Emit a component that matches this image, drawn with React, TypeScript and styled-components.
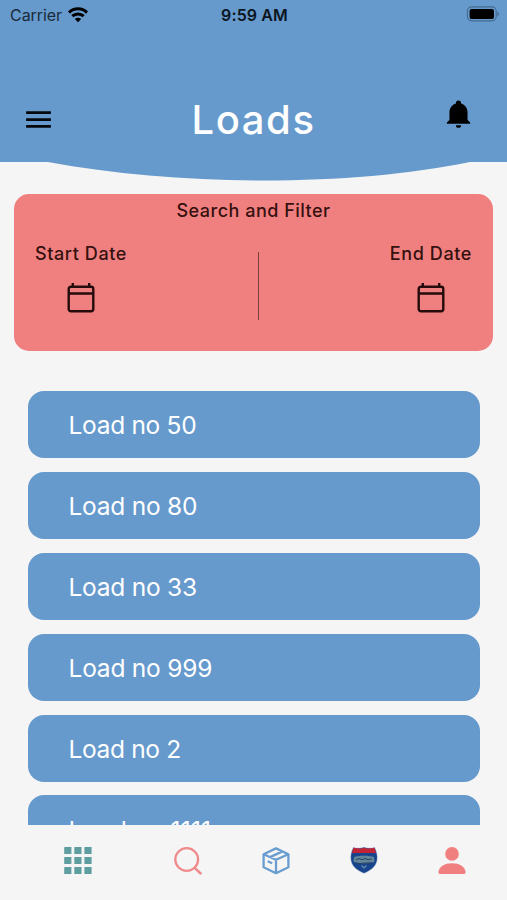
import React from 'react';
import styled, { createGlobalStyle } from 'styled-components';

const BLUE = '#6699cc';
const CORAL = '#f08080';
const PAPER = '#f5f5f5';

const GlobalStyle = createGlobalStyle`
  * { box-sizing: border-box; }
  body { margin: 0; background: ${PAPER}; font-family: Inter, "Liberation Sans", sans-serif; }
  svg { display: block; flex: none; }
`;

const Screen = styled.div`
  width: 507px;
  height: 900px;
  display: flex;
  flex-direction: column;
  overflow: hidden;
  background: ${PAPER};
`;

const Header = styled.header`
  height: 162px;
  flex: none;
  background: ${BLUE};
`;

const StatusBar = styled.div`
  height: 29px;
  padding: 0 8px 0 10px;
  display: grid;
  grid-template-columns: 1fr auto 1fr;
  align-items: center;
  color: #0b1620;
  font-size: 16px;
`;

const Carrier = styled.div`
  display: flex;
  align-items: center;
  gap: 6px;
  color: #1a2b3b;
  letter-spacing: -0.05px;
`;

const Clock = styled.div`
  font-weight: 600;
  letter-spacing: 0.1px;
`;

const Battery = styled.div`
  display: flex;
  justify-content: flex-end;
  padding-bottom: 1px;
`;

const TitleBar = styled.div`
  height: 64px;
  margin-top: 58px;
  padding: 0 33px 0 22px;
  display: flex;
  align-items: center;
  justify-content: space-between;
`;

const BellSlot = styled.div`
  padding-bottom: 11px;
`;

const Title = styled.h1`
  margin: 1px 0 0 9px;
  color: #fff;
  font-size: 40px;
  line-height: 48px;
  font-weight: 500;
  letter-spacing: 1.6px;
`;

const FilterCard = styled.section`
  height: 156.5px;
  flex: none;
  margin: 13px 14px 0;
  padding-top: 5px;
  border-radius: 15px;
  background: ${CORAL};
  color: #35110f;
  font-size: 18px;
  line-height: 24px;
  font-weight: 500;
  letter-spacing: 0.5px;
`;

const FilterTitle = styled.div`
  text-align: center;
`;

const DateRow = styled.div`
  margin-top: 19px;
  padding: 0 21px;
  display: grid;
  grid-template-columns: 1fr 1px 1fr;
`;

const DateField = styled.div<{ $end?: boolean }>`
  display: flex;
  flex-direction: column;
  align-items: center;
  gap: 16px;
  letter-spacing: 0.6px;
  justify-self: ${(p) => (p.$end ? 'end' : 'start')};
`;

const Divider = styled.div`
  height: 68px;
  margin: 10px -5px 0 5px;
  background: #7a3d3c;
`;

const LoadList = styled.main`
  height: 433.5px;
  flex: none;
  margin-top: 40.5px;
  padding: 0 27px 0 28px;
  display: flex;
  flex-direction: column;
  gap: 13.5px;
  overflow: hidden;
`;

const LoadItem = styled.div<{ $tracking: number }>`
  height: 67.4px;
  flex: none;
  padding: 1px 0 0 40.5px;
  display: flex;
  align-items: center;
  border-radius: 16px;
  background: ${BLUE};
  color: #fff;
  font-size: 24.5px;
  letter-spacing: ${(p) => p.$tracking}px;
`;

const TabBar = styled.nav`
  flex: 1;
  padding: 22px 40px 0 64px;
  display: flex;
  align-items: flex-start;
`;

const Tab = styled.div<{ $gap?: number }>`
  width: 28px;
  margin-right: ${(p) => p.$gap ?? 0}px;
`;

const Curve = () => (
  <svg width="507" height="19" viewBox="0 0 507 19">
    <path d="M48 0C180 24.7 350 24.7 470 0Z" fill={BLUE} />
  </svg>
);

const WifiIcon = () => (
  <svg width="20" height="16" viewBox="0 0 20 16" fill="none" stroke="#000" strokeWidth="3">
    <path d="M1 5.6C6 .6 14 .6 19 5.6M4.3 9.2c3.2-3.1 8.2-3.1 11.4 0" />
    <path d="M10 15.3 6.8 12c1.8-1.6 4.6-1.6 6.4 0Z" fill="#000" stroke="none" />
  </svg>
);

const BatteryIcon = () => (
  <svg width="33" height="16" viewBox="0 0 33 16">
    <rect x="1.4" y=".9" width="28.8" height="14" rx="4.3" fill="none" stroke="#456b90" strokeWidth="1.1" />
    <rect x="3.6" y="2.9" width="24.4" height="10.2" rx="2.2" fill="#000" />
    <path d="M31.4 5.5c2 .8 2 4 0 4.8Z" fill="#456b90" />
  </svg>
);

const MenuIcon = () => (
  <svg width="33" height="33" viewBox="0 0 24 24" fill="#05090d">
    <path d="M3 6h18v2H3zM3 11h18v2H3zM3 16h18v2H3z" />
  </svg>
);

const BellIcon = () => (
  <svg width="31" height="31" viewBox="0 0 24 24">
    <path d="M21 19v1H3v-1l2-2v-6c0-3.1 2.03-5.83 5-6.71V4a2 2 0 0 1 4 0v.29c2.97.88 5 3.61 5 6.71v6l2 2m-7 2a2 2 0 0 1-4 0" />
  </svg>
);

const CalendarIcon = () => (
  <svg width="28" height="31" viewBox="0 0 28 31" fill="none" stroke="#250b0b" strokeWidth="2.4">
    <rect x="1.7" y="4.7" width="24.6" height="24.6" rx="2.2" />
    <path d="M1.7 11.5h24.6M5.8 1v4M22.2 1v4" />
  </svg>
);

const GridIcon = () => (
  <svg width="28" height="28" viewBox="0 0 28 28" fill="#5f9ea0">
    {[0, 10, 20].map((y) =>
      [0.2, 10.3, 20.4].map((x) => <rect key={`${x}-${y}`} x={x} y={y} width="7.2" height="7.1" rx=".4" />),
    )}
  </svg>
);

const SearchIcon = () => (
  <svg width="28" height="28" viewBox="0 0 28 28" fill="none" stroke="#f08b8b" strokeWidth="2.3">
    <circle cx="12.7" cy="12.5" r="11.4" />
    <path d="m20.4 20.6 6.8 6.4" strokeWidth="2.6" />
  </svg>
);

const BoxIcon = () => (
  <svg width="28" height="28" viewBox="0 0 28 28" fill="none" stroke="#6a9dcf" strokeWidth="2.3" strokeLinejoin="round">
    <path d="M14 1.4 26.4 7.2v13.1L14 26.2 1.6 20.3V7.2ZM1.6 7.2 14 12.8l12.4-5.6M14 12.8v13.4M8.2 10.1l12.2-5.7M5.7 14.3l4.5 2" />
  </svg>
);

const ShieldIcon = () => (
  <svg width="28" height="28" viewBox="0 0 28 28">
    <path d="M3.5.4c3 1.3 7.4 1.1 10.5-.1 3.1 1.2 7.5 1.4 10.5.1 1.5 3 2.7 6.2 2.7 10.2 0 8.2-5.6 12.7-13.2 15.6C6.400 23.300.8 18.800.8 10.600c0-4 1.200-7.200 2.700-10.200Z" fill="#17448c" stroke="#8c9ebd" strokeWidth=".4" />
    <path d="M3.7.8c3 1.2 7.2 1 10.3-.1 3.1 1.100 7.300 1.300 10.300.1l2 5.300H1.700Z" fill="#c22436" />
    <path d="M4 10.300c3-2 17-2 20 0l.5 4.500c-4 2.300-17 2.300-21 0Z" fill="#61869a" />
    <path d="M6 12.700l3-1.200 3 1.200 3-1.200 3 1.200 4-.9M5 15.800l5 .8 4-.5 8-.3" fill="none" stroke="#293f65" strokeWidth="1" />
    <path d="m11.500 18.500 2.500 2.400 2.500-2.400" fill="none" stroke="#688eae" strokeWidth="1.2" />
  </svg>
);

const UserIcon = () => (
  <svg width="28" height="28" viewBox="0 0 28 28" fill={CORAL}>
    <circle cx="14" cy="6.9" r="6.8" />
    <path d="M.5 24.500C1.300 19.500 6.600 16.300 14 16.300s12.700 3.200 13.500 8.200c.2 1.600-.6 2.600-1.900 2.600H2.400C1.100 27.100.3 26.100.5 24.500Z" />
  </svg>
);

const loads = [
  { number: '50', tracking: -0.3 },
  { number: '80', tracking: -0.25 },
  { number: '33', tracking: -0.25 },
  { number: '999', tracking: -0.22 },
  { number: '2', tracking: -0.35 },
  { number: '1111', tracking: 0.2 },
];

export default function App() {
  return (
    <>
      <GlobalStyle />
      <Screen>
        <Header>
          <StatusBar>
            <Carrier>Carrier <WifiIcon /></Carrier>
            <Clock>9:59 AM</Clock>
            <Battery><BatteryIcon /></Battery>
          </StatusBar>
          <TitleBar>
            <MenuIcon />
            <Title>Loads</Title>
            <BellSlot><BellIcon /></BellSlot>
          </TitleBar>
        </Header>
        <Curve />
        <FilterCard>
          <FilterTitle>Search and Filter</FilterTitle>
          <DateRow>
            <DateField><span>Start Date</span><CalendarIcon /></DateField>
            <Divider />
            <DateField $end><span>End Date</span><CalendarIcon /></DateField>
          </DateRow>
        </FilterCard>
        <LoadList>
          {loads.map((load) => (
            <LoadItem key={load.number} $tracking={load.tracking}>Load no {load.number}</LoadItem>
          ))}
        </LoadList>
        <TabBar>
          <Tab $gap={82}><GridIcon /></Tab>
          <Tab $gap={60}><SearchIcon /></Tab>
          <Tab $gap={60}><BoxIcon /></Tab>
          <Tab $gap={60}><ShieldIcon /></Tab>
          <Tab><UserIcon /></Tab>
        </TabBar>
      </Screen>
    </>
  );
}
